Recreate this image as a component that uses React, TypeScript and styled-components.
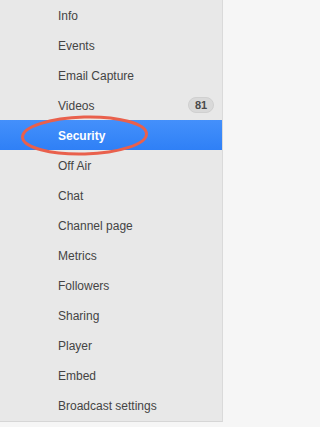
import React from "react";
import styled, { createGlobalStyle } from "styled-components";

const Global = createGlobalStyle`
  html, body { margin: 0; padding: 0; background: #f6f6f6; }
  body { font-family: "Liberation Sans", Arial, Helvetica, sans-serif; }
`;

const Page = styled.div`
  width: 225px;
  height: 427px;
  background: #f6f6f6;
  overflow: hidden;
`;

const Panel = styled.nav`
  position: relative;
  width: 222px;
  background: #e8e8e8;
  border-right: 1px solid #dadada;
  border-bottom: 1px solid #d6d6d6;
  padding-bottom: 1px;
`;

const List = styled.ul`
  list-style: none;
  margin: 0;
  padding: 0;
  display: flex;
  flex-direction: column;
`;

const Item = styled.li<{ $active?: boolean }>`
  height: 30px;
  box-sizing: border-box;
  display: flex;
  align-items: center;
  justify-content: space-between;
  padding: 2px 8px 0 58px;
  font-size: 12px;
  color: ${(p) => (p.$active ? "#ffffff" : "#444444")};
  font-weight: ${(p) => (p.$active ? 700 : 400)};
  background: ${(p) =>
    p.$active ? "linear-gradient(#4490fb, #2f80f6)" : "transparent"};
`;

const Badge = styled.span`
  min-width: 26px;
  height: 16px;
  box-sizing: border-box;
  border-radius: 8px;
  background: #d9d9d9;
  border: 1px solid #d0d0d0;
  color: #4a4a4a;
  font-size: 11px;
  font-weight: 700;
  display: flex;
  align-items: center;
  justify-content: center;
  margin-top: -2px;
`;

const Circle = styled.svg`
  position: absolute;
  left: 18px;
  top: 113px;
  width: 134px;
  height: 46px;
  pointer-events: none;
`;

const items = [
  "Info",
  "Events",
  "Email Capture",
  "Videos",
  "Security",
  "Off Air",
  "Chat",
  "Channel page",
  "Metrics",
  "Followers",
  "Sharing",
  "Player",
  "Embed",
  "Broadcast settings",
];

export default function App() {
  return (
    <Page>
      <Global />
      <Panel>
        <List>
          {items.map((label) => (
            <Item key={label} $active={label === "Security"}>
              <span>{label}</span>
              {label === "Videos" && <Badge>81</Badge>}
            </Item>
          ))}
        </List>
        <Circle viewBox="0 0 134 46">
          <ellipse
            cx="66.5"
            cy="22.5"
            rx="62"
            ry="18.5"
            fill="none"
            stroke="#e9604c"
            strokeWidth="3"
            transform="rotate(-1.5 66.5 22.5)"
          />
        </Circle>
      </Panel>
    </Page>
  );
}
